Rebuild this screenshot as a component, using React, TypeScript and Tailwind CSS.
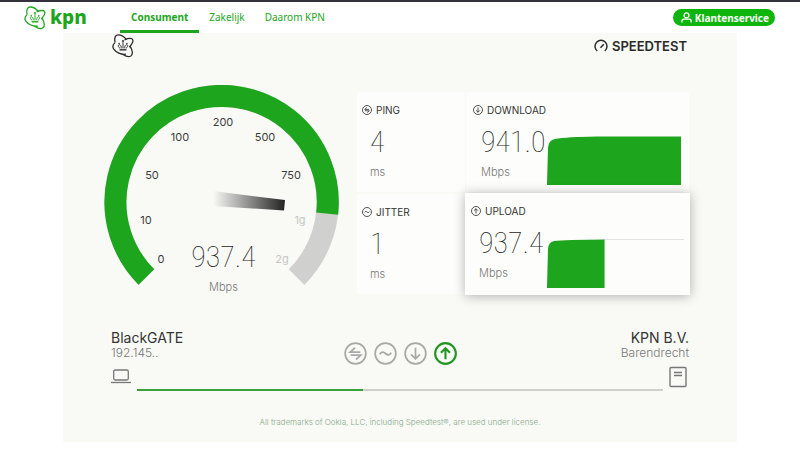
import type { ReactNode } from "react";

const GREEN = "#1da51d";

function CrownLogo({ className }: { className: string }) {
  return (
    <svg viewBox="0 0 24 26" className={className} fill="none" stroke="currentColor" strokeWidth="1.4" strokeLinecap="round" aria-hidden="true">
      <path d="M3.300 8.500C2.300 3.500 4 1 7 1c3 0 6 2 8.500 4.600" />
      <path d="M14.200 6.200C18 4.300 22 4.300 22.700 6.600c.6 2.400-1.700 5-3.400 7.200" />
      <path d="M19.800 13.400C22 17 22.900 21.500 20.600 23.700c-2 1.700-6 .2-8.600-1.500" />
      <path d="M3 9.600C1 11.500.5 14 2 16.300c2.500 3.600 8 6.200 12.600 5.600" />
      <g fill="currentColor" stroke="none">
        <circle cx="12" cy="7.600" r="1.100" />
        <circle cx="7.800" cy="10.300" r=".8" />
        <circle cx="16.200" cy="10.300" r=".8" />
        <path d="M8.300 16.400h7.400v1.500H8.300z" />
      </g>
      <path strokeWidth="1" d="M8.600 15.500C6.400 13.800 6.400 11.600 8 11.600c1.400 0 2.200 1.600 2.200 3.500M15.400 15.500c2.200-1.700 2.200-3.900.6-3.900-1.400 0-2.200 1.600-2.200 3.500M12 9v6.200" />
    </svg>
  );
}

type Kind = "ping" | "jitter" | "down" | "up";

const glyphs: Record<Kind, string> = {
  ping: "M17 10.500H6.500l5-4.500M7 13.800h10.500l-5 4.500",
  jitter: "M6 13c1.600-3 3.800-3 6-1s4.400 2 6-1",
  down: "M12 6v11.500M7.300 12.800l4.700 4.700 4.700-4.700",
  up: "M12 18V6.500M7.300 11.200L12 6.500l4.700 4.700",
};

function CircleIcon({ kind, className, width = 1.8 }: { kind: Kind; className: string; width?: number }) {
  return (
    <svg viewBox="0 0 24 24" className={className} fill="none" stroke="currentColor" strokeWidth={width} aria-hidden="true">
      <circle cx="12" cy="12" r="10.800" />
      <path d={glyphs[kind]} />
    </svg>
  );
}

const ticks = [
  { label: "0", x: 57, y: 178 },
  { label: "10", x: 42, y: 139 },
  { label: "50", x: 48, y: 94 },
  { label: "100", x: 76, y: 56 },
  { label: "200", x: 119, y: 41 },
  { label: "500", x: 161, y: 56 },
  { label: "750", x: 187, y: 94 },
  { label: "1g", x: 196, y: 139 },
  { label: "2g", x: 178, y: 178 },
];

function Gauge() {
  return (
    <svg viewBox="0 0 235 212" className="h-[212px] w-[235px] shrink-0" role="img" aria-label="Speed gauge">
      <defs>
        <linearGradient id="needle" x1="0" x2="1" y1="0" y2="0">
          <stop offset="0" stopColor="#222" stopOpacity="0" />
          <stop offset="1" stopColor="#222" />
        </linearGradient>
      </defs>
      <path d="M42.400 192.100A106.200 106.200 0 1 1 192.600 192.100" fill="none" stroke="#d0d0ce" strokeWidth="22" />
      <path d="M42.400 192.100A106.200 106.200 0 1 1 223.200 128.600" fill="none" stroke={GREEN} strokeWidth="22" />
      <path d="M109 106L181 115L180 125.500L109 121Z" fill="url(#needle)" />
      {ticks.map((t, i) => (
        <text key={t.label} x={t.x} y={t.y} textAnchor="middle" fontSize="11" fill={i > 6 ? "#c6c7c4" : "#3c3c3c"}>
          {t.label}
        </text>
      ))}
    </svg>
  );
}

function Digits({ children }: { children: ReactNode }) {
  return (
    <div className="font-['Roboto_Condensed',Roboto,sans-serif] text-[30px] leading-[36px] font-thin text-[#1c1c1c]">
      {children}
    </div>
  );
}

function Card({ kind, label, value, unit, className, children }: {
  kind: Kind; label: string; value: string; unit: string; className: string; children?: ReactNode;
}) {
  return (
    <section className={`flex flex-col bg-[#fdfefb] pt-3 ${className}`}>
      <h2 className="flex items-center gap-1 text-[10px] leading-3 text-[#333]">
        <CircleIcon kind={kind} className="size-[10px]" width={2} />
        {label}
      </h2>
      <div className="flex flex-1">
        <div className="w-[68px] shrink-0 pt-2 pl-2">
          <Digits>{value}</Digits>
          <div className="pt-1 text-[11px] leading-4 font-light text-[#777]">{unit}</div>
        </div>
        {children}
      </div>
    </section>
  );
}

export default function App() {
  return (
    <div className="min-h-screen bg-white font-[Inter,sans-serif]">
      <header className="flex h-[33px] items-stretch border-t-2 border-[#33313d] pr-[25px] pl-6 font-['Noto_Sans',sans-serif] text-[#1da51d]">
        <a href="#" className="flex w-24 items-center gap-1" aria-label="kpn">
          <CrownLogo className="h-6 w-[22px]" />
          <span className="pb-[2px] text-[19px] leading-6 font-extrabold">kpn</span>
        </a>
        <nav className="flex items-stretch text-[10px] leading-[30px]">
          <a href="#" className="border-b-3 border-[#1da51d] px-[11px] font-bold">Consument</a>
          <a href="#" className="px-[10px]">Zakelijk</a>
          <a href="#" className="px-[10px]">Daarom KPN</a>
        </nav>
        <button className="mt-[7px] ml-auto flex h-[17px] items-center gap-[3px] rounded-full bg-[#0db50d] pr-[6px] pl-2 text-[10px] leading-4 font-bold text-white">
          <svg viewBox="0 0 12 12" className="size-[11px]" fill="none" stroke="currentColor" strokeWidth="1.400" aria-hidden="true">
            <circle cx="6" cy="3.700" r="2.700" />
            <path d="M1 11.500V9.800c0-1.500 1-2 2.300-2h5.400c1.300 0 2.300.5 2.300 2v1.700" />
          </svg>
          Klantenservice
        </button>
      </header>

      <main className="mx-[63px] bg-[#f9faf6] px-12 pb-[14px]">
        <div className="flex h-[52px] items-start justify-between">
          <CrownLogo className="mt-px h-6 w-6 text-[#2b2b2b]" />
          <div className="mt-[5px] flex items-center gap-1 pr-[2px] text-[#2b2b2b]">
            <svg viewBox="0 0 14 14" className="size-[14px]" fill="none" stroke="currentColor" strokeWidth="1.500" aria-hidden="true">
              <path d="M3.200 12A6 6 0 1 1 10.800 12M6.500 8.800L9.800 5.200" />
            </svg>
            <span className="text-[13px] leading-4 font-semibold">SPEEDTEST</span>
          </div>
        </div>

        <div className="-ml-[7px] flex items-start justify-between gap-[18px]">
          <div className="grid">
            <div className="col-start-1 row-start-1"><Gauge /></div>
            <div className="col-start-1 row-start-1 self-end pb-[2px] pl-1 text-center">
              <Digits>937.4</Digits>
              <div className="pt-1 text-[11px] leading-4 font-light text-[#777]">Mbps</div>
            </div>
          </div>
          <div className="mt-[7px] grid max-w-[420px] flex-1 grid-cols-[108px_minmax(0,1fr)] grid-rows-[100px_100px] gap-x-px gap-y-[2px]">
            <Card kind="ping" label="PING" value="4" unit="ms" className="pl-[5px]" />
            <Card kind="down" label="DOWNLOAD" value="941.0" unit="Mbps" className="pl-[7px]">
              <svg viewBox="0 0 136 49" preserveAspectRatio="none" className="mb-[7px] ml-[6px] h-[49px] min-w-0 flex-1 self-end pr-2" aria-hidden="true">
                <path d="M0 49L1 12Q1.500 4 8 3Q20 1 50 .6L136 .4V49Z" fill={GREEN} />
              </svg>
            </Card>
            <Card kind="jitter" label="JITTER" value="1" unit="ms" className="pl-[5px]" />
            <Card kind="up" label="UPLOAD" value="937.4" unit="Mbps" className="z-10 -m-px pl-[6px] shadow-[0_1px_11px_rgba(0,0,0,0.3)]">
              <svg viewBox="0 0 138 49" preserveAspectRatio="none" className="mb-[7px] ml-2 h-[49px] min-w-0 flex-1 self-end pr-[6px]" aria-hidden="true">
                <path d="M56 .5H138" stroke="#e2e2e0" />
                <path d="M0 49L1 10Q1.500 3 7 2Q18 .6 58 .4V49Z" fill={GREEN} />
              </svg>
            </Card>
          </div>
        </div>

        <div className="mt-[33px] flex h-9 items-start justify-between text-[#333]">
          <div className="w-36">
            <div className="text-[14px] leading-4">BlackGATE</div>
            <div className="text-[12px] leading-[14px] font-light text-[#777]">192.145..</div>
          </div>
          <div className="mt-3 flex gap-[7px] text-[#a8a9a6]">
            <CircleIcon kind="ping" className="size-[23px]" />
            <CircleIcon kind="jitter" className="size-[23px]" />
            <CircleIcon kind="down" className="size-[23px]" />
            <CircleIcon kind="up" className="size-[23px] text-[#1f961f]" width={2.2} />
          </div>
          <div className="w-36 text-right">
            <div className="text-[14px] leading-4">KPN B.V.</div>
            <div className="text-[12px] leading-[14px] font-light text-[#777]">Barendrecht</div>
          </div>
        </div>

        <div className="flex h-[25px] items-start gap-[6px] pr-[2px] text-[#777]">
          <svg viewBox="0 0 20 15" className="mt-[3px] h-[15px] w-5" fill="none" stroke="currentColor" strokeWidth="1.300" aria-hidden="true">
            <rect x="2.700" y="1" width="14.600" height="10" rx="1.500" />
            <path d="M0 13.500h20" />
          </svg>
          <div className="mt-[23px] h-[2px] flex-1 bg-[#cfd0cc]">
            <div className="h-full w-[43%] bg-[#38a138]" />
          </div>
          <svg viewBox="0 0 18 22" className="h-[22px] w-[18px]" fill="none" stroke="currentColor" strokeWidth="1.400" aria-hidden="true">
            <rect x="1" y="1.500" width="16" height="19" rx="1" />
            <path d="M5 6.500h8M5 9.500h8" />
          </svg>
        </div>

        <footer className="mt-[25px] text-center text-[8px] leading-3 font-light text-[#86a886]">
          All trademarks of Ookla, LLC, including Speedtest®, are used under license.
        </footer>
      </main>
    </div>
  );
}
